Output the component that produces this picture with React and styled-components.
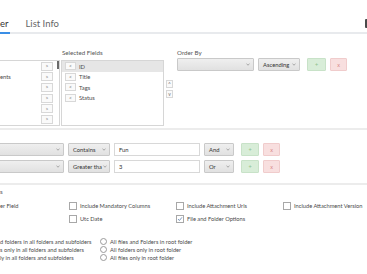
import React from "react";
import styled, { createGlobalStyle } from "styled-components";

const GlobalStyle = createGlobalStyle`
  html, body {
    margin: 0;
    padding: 0;
    background: #fff;
  }
  body {
    font-family: Lato, "Open Sans", sans-serif;
    color: #4a4a4a;
    overflow: hidden;
  }
`;

const Page = styled.div`
  width: 367px;
  height: 274px;
  overflow: hidden;
`;

const TabBar = styled.div`
  display: flex;
  align-items: flex-end;
  height: 32px;
  border-bottom: 2px solid #e8eaed;
`;

const Tab = styled.div`
  font-size: 9.5px;
  line-height: 12px;
  padding: 0 2px 2px 0;
  margin-bottom: -2px;
  margin-left: ${(p) => (p.first ? "0" : "15px")};
  color: ${(p) => (p.active ? "#333" : "#666")};
  border-bottom: 2px solid ${(p) => (p.active ? "#3a8ee6" : "transparent")};
`;

const EdgeButton = styled.div`
  margin-left: auto;
  margin-right: -8px;
  align-self: flex-start;
  margin-top: 19px;
  width: 10px;
  height: 9px;
  background: #4a4a4a;
  border-radius: 1px;
`;

const FieldsSection = styled.div`
  display: flex;
  height: 96px;
  padding-top: 15px;
  box-sizing: border-box;
  border-bottom: 2px solid #ececec;
`;

const Column = styled.div`
  display: flex;
  flex-direction: column;
  width: ${(p) => p.w || "auto"};
  margin-left: ${(p) => p.ml || "0"};
`;

const Label = styled.div`
  font-size: 6.2px;
  line-height: 8px;
  height: 8px;
  color: #555;
  margin-bottom: ${(p) => p.mb || "3px"};
  padding-left: ${(p) => p.pl || "0"};
  white-space: nowrap;
`;

const ListBox = styled.div`
  height: 66px;
  box-sizing: border-box;
  border: 1px solid #d6d6d6;
  border-left: ${(p) => (p.cut ? "none" : "1px solid #d6d6d6")};
  display: flex;
  overflow: hidden;
`;

const AvailList = styled.div`
  flex: 1;
  display: flex;
  flex-direction: column;
`;

const AvailRow = styled.div`
  height: 10.6px;
  display: flex;
  align-items: center;
  justify-content: space-between;
  padding-right: 4px;
  font-size: 5.8px;
  white-space: nowrap;
`;

const SmallBtn = styled.div`
  width: ${(p) => p.w || "12px"};
  height: ${(p) => p.h || "9px"};
  box-sizing: border-box;
  border: 1px solid #d8d8d8;
  background: #fafafa;
  color: #777;
  font-size: 5px;
  display: flex;
  align-items: center;
  justify-content: center;
  flex-shrink: 0;
`;

const ScrollTrack = styled.div`
  width: 2px;
  display: flex;
  flex-direction: column;
`;

const ScrollThumb = styled.div`
  height: 8px;
  background: #6b6b6b;
`;

const SelList = styled.div`
  flex: 1;
  display: flex;
  flex-direction: column;
`;

const SelRow = styled.div`
  height: 10.5px;
  display: flex;
  align-items: center;
  gap: 3px;
  padding-left: 3px;
  font-size: 5.8px;
  background: ${(p) => (p.active ? "#e6e6e6" : "transparent")};
`;

const ArrowCol = styled.div`
  width: 7px;
  margin-left: 2px;
  margin-top: 31px;
  display: flex;
  flex-direction: column;
  gap: 2px;
`;

const Row = styled.div`
  display: flex;
  align-items: center;
`;

const Select = styled.div`
  width: ${(p) => p.w};
  margin-left: ${(p) => p.ml || "0"};
  height: 13px;
  box-sizing: border-box;
  border: 1px solid #c9c9c9;
  border-radius: 1px;
  background: linear-gradient(#efefef, #e1e1e1);
  display: flex;
  align-items: center;
  justify-content: space-between;
  padding: 0 3px 0 4px;
  font-size: 5.8px;
  color: #333;
  flex-shrink: 0;
  span {
    white-space: nowrap;
  }
`;

const Caret = () => (
  <svg width="4" height="3" viewBox="0 0 4 3" style={{ flexShrink: 0, marginLeft: 1 }}>
    <path d="M0.5 0.8 L2 2.2 L3.5 0.8" fill="none" stroke="#888" strokeWidth="0.7" />
  </svg>
);

const TextInput = styled.div`
  width: ${(p) => p.w};
  margin-left: 4px;
  height: 13px;
  box-sizing: border-box;
  border: 1px solid #d8d8d8;
  background: #fff;
  display: flex;
  align-items: center;
  padding-left: 4px;
  font-size: 5.8px;
  color: #333;
`;

const ActionBtn = styled.div`
  width: ${(p) => p.w};
  margin-left: ${(p) => p.ml};
  height: 13px;
  box-sizing: border-box;
  border: 1px solid ${(p) => (p.kind === "add" ? "#c8e2c8" : "#f0cccc")};
  background: ${(p) => (p.kind === "add" ? "#d8edd8" : "#f8dfdf")};
  color: ${(p) => (p.kind === "add" ? "#8cbf8c" : "#d98a8a")};
  font-size: 5.5px;
  display: flex;
  align-items: center;
  justify-content: center;
  border-radius: 1px;
`;

const FilterSection = styled.div`
  display: flex;
  flex-direction: column;
  gap: 4px;
  padding: 13px 0 10px;
  border-bottom: 2px solid #ececec;
`;

const OptionsSection = styled.div`
  padding-top: 3px;
  font-size: 5.7px;
  color: #4a4a4a;
`;

const CheckGrid = styled.div`
  display: grid;
  grid-template-columns: 69px 107px 107px 1fr;
  grid-auto-rows: 13px;
  align-items: center;
`;

const CheckItem = styled.div`
  display: flex;
  align-items: center;
  gap: 3px;
  white-space: nowrap;
`;

const Box = styled.div`
  width: 8px;
  height: 8px;
  box-sizing: border-box;
  border: 1px solid #a8a8a8;
  background: #fff;
  display: flex;
  align-items: center;
  justify-content: center;
`;

const RadioGrid = styled.div`
  margin-top: 12px;
  display: grid;
  grid-template-columns: 100px 1fr;
  grid-auto-rows: 8px;
  align-items: center;
`;

const RadioItem = styled.div`
  display: flex;
  align-items: center;
  gap: 3px;
  white-space: nowrap;
`;

const Circle = styled.div`
  width: 7px;
  height: 7px;
  box-sizing: border-box;
  border: 1px solid #9a9a9a;
  border-radius: 50%;
  background: #fff;
`;

const Check = ({ checked, children }) => (
  <CheckItem>
    <Box>
      {checked && (
        <svg width="6" height="6" viewBox="0 0 6 6">
          <path d="M1 3 L2.4 4.5 L5 1.3" fill="none" stroke="#5a7fb0" strokeWidth="0.8" />
        </svg>
      )}
    </Box>
    <span>{children}</span>
  </CheckItem>
);

const availRows = ["", "ents", "", "", "", ""];
const selected = ["ID", "Title", "Tags", "Status"];

function FilterRow({ op, value, join }) {
  return (
    <Row>
      <Select w="84px" ml="-20px">
        <span></span>
        <Caret />
      </Select>
      <Select w="42px" ml="4px">
        <span>{op}</span>
        <Caret />
      </Select>
      <TextInput w="86px">{value}</TextInput>
      <Select w="30px" ml="4px">
        <span>{join}</span>
        <Caret />
      </Select>
      <ActionBtn kind="add" w="18px" ml="7px">+</ActionBtn>
      <ActionBtn kind="remove" w="17px" ml="4px">x</ActionBtn>
    </Row>
  );
}

export default function App() {
  return (
    <Page>
      <GlobalStyle />
      <TabBar>
        <Tab first active>er</Tab>
        <Tab>List Info</Tab>
        <EdgeButton />
      </TabBar>

      <FieldsSection>
        <Column w="60px">
          <Label>&nbsp;</Label>
          <ListBox cut>
            <AvailList>
              {availRows.map((t, i) => (
                <AvailRow key={i}>
                  <span>{t}</span>
                  <SmallBtn>&gt;</SmallBtn>
                </AvailRow>
              ))}
            </AvailList>
            <ScrollTrack>
              <ScrollThumb />
            </ScrollTrack>
          </ListBox>
        </Column>

        <Column w="103px" ml="1px">
          <Label pl="1px">Selected Fields</Label>
          <ListBox>
            <SelList>
              {selected.map((t, i) => (
                <SelRow key={t} active={i === 0}>
                  <SmallBtn w="11px" h="8px">&lt;</SmallBtn>
                  <span>{t}</span>
                </SelRow>
              ))}
            </SelList>
          </ListBox>
        </Column>

        <ArrowCol>
          <SmallBtn w="7px" h="8px">^</SmallBtn>
          <SmallBtn w="7px" h="8px">v</SmallBtn>
        </ArrowCol>

        <Column ml="4px">
          <Label mb="1px">Order By</Label>
          <Row>
            <Select w="77px">
              <span></span>
              <Caret />
            </Select>
            <Select w="42px" ml="4px">
              <span>Ascending</span>
              <Caret />
            </Select>
            <ActionBtn kind="add" w="19px" ml="7px">+</ActionBtn>
            <ActionBtn kind="remove" w="17px" ml="4px">x</ActionBtn>
          </Row>
        </Column>
      </FieldsSection>

      <FilterSection>
        <FilterRow op="Contains" value="Fun" join="And" />
        <FilterRow op="Greater tha" value="3" join="Or" />
      </FilterSection>

      <OptionsSection>
        <Label>s</Label>
        <CheckGrid>
          <CheckItem>er Field</CheckItem>
          <Check>Include Mandatory Columns</Check>
          <Check>Include Attachment Urls</Check>
          <Check>Include Attachment Version</Check>
          <div />
          <Check>Utc Date</Check>
          <Check checked>File and Folder Options</Check>
          <div />
        </CheckGrid>
        <RadioGrid>
          <RadioItem>d folders in all folders and subfolders</RadioItem>
          <RadioItem>
            <Circle />
            All files and Folders in root folder
          </RadioItem>
          <RadioItem>s only in all folders and subfolders</RadioItem>
          <RadioItem>
            <Circle />
            All folders only in root folder
          </RadioItem>
          <RadioItem>ly in all folders and subfolders</RadioItem>
          <RadioItem>
            <Circle />
            All files only in root folder
          </RadioItem>
        </RadioGrid>
      </OptionsSection>
    </Page>
  );
}
